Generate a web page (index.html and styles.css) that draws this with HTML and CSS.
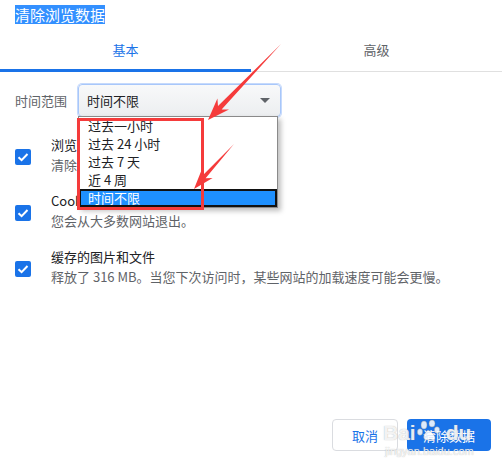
FILE: index.html
```html
<!DOCTYPE html>
<html lang="zh-CN">
<head>
  <meta charset="UTF-8">
  <title>清除浏览数据</title>
  <meta name="viewport" content="width=device-width, initial-scale=1">
  <link rel="stylesheet" href="styles.css">
</head>
<body>

  <div class="dialog">
    <h1 class="title"><span class="selected-text">清除浏览数据</span></h1>

    <div class="tabs">
      <div class="tab active">基本</div>
      <div class="tab">高级</div>
    </div>

    <div class="range-row">
      <span class="range-label">时间范围</span>
      <div class="select">
        <span>时间不限</span>
        <span class="select-arrow"></span>
      </div>
    </div>

    <div class="check-row">
      <span class="checkbox">
        <svg width="16" height="16" viewBox="0 0 16 16"><polyline points="3.5,8.2 6.6,11.2 12.5,5" fill="none" stroke="#fff" stroke-width="2"/></svg>
      </span>
      <div class="check-text">
        <div class="check-title">浏览记录</div>
        <div class="check-sub">清除所有已同步设备上的浏览记录</div>
      </div>
    </div>

    <div class="check-row">
      <span class="checkbox">
        <svg width="16" height="16" viewBox="0 0 16 16"><polyline points="3.5,8.2 6.6,11.2 12.5,5" fill="none" stroke="#fff" stroke-width="2"/></svg>
      </span>
      <div class="check-text">
        <div class="check-title">Cookie 及其他网站数据</div>
        <div class="check-sub">您会从大多数网站退出。</div>
      </div>
    </div>

    <div class="check-row">
      <span class="checkbox">
        <svg width="16" height="16" viewBox="0 0 16 16"><polyline points="3.5,8.2 6.6,11.2 12.5,5" fill="none" stroke="#fff" stroke-width="2"/></svg>
      </span>
      <div class="check-text">
        <div class="check-title">缓存的图片和文件</div>
        <div class="check-sub">释放了 316 MB。当您下次访问时，某些网站的加载速度可能会更慢。</div>
      </div>
    </div>

    <div class="footer">
      <button class="btn btn-cancel">取消</button>
      <button class="btn btn-primary">清除数据</button>
    </div>
  </div>

  <!-- 下拉列表 -->
  <ul class="dropdown">
    <li>过去一小时</li>
    <li>过去 24 小时</li>
    <li>过去 7 天</li>
    <li>近 4 周</li>
    <li class="current">时间不限</li>
  </ul>

  <!-- 标注 -->
  <div class="mark-box"></div>
  <svg class="arrows" width="502" height="466" viewBox="0 0 502 466">
    <polygon fill="#f53b3b" points="281,44 221.6,109.4 229,109.6 208,120 217.4,98.6 218,106"/>
    <polygon fill="#f53b3b" points="234,144 205.6,178.2 212.6,177.9 194,189 202.2,168.5 202.6,175.6"/>
  </svg>

  <div class="watermark">
    <div class="wm-logo">Bai<svg width="30" height="22" viewBox="0 0 30 22"><ellipse cx="8" cy="5" rx="3" ry="4"/><ellipse cx="16" cy="3.5" rx="3" ry="3.5"/><ellipse cx="4" cy="12" rx="2.6" ry="3.2"/><ellipse cx="21" cy="10" rx="2.6" ry="3.2"/><path d="M12 10 C7 14 6 20 11 20 C13 20 14 19 16 20 C21 21 20 14 12 10 Z"/></svg>du</div>
    <div class="wm-site">jingyan.baidu.com</div>
  </div>

</body>
</html>
```

FILE: styles.css
```css
body {
  margin: 0;
  font-family: "Noto Sans CJK SC", "Liberation Sans", sans-serif;
  background: #fff;
  color: #202124;
}

.dialog {
  width: 502px;
  height: 466px;
  display: flex;
  flex-direction: column;
  overflow: hidden;
}

.title {
  margin: 0;
  padding: 5px 15px 0;
  font-size: 15px;
  font-weight: normal;
  line-height: 19px;
  height: 19px;
}

.selected-text {
  background: #3390ff;
  color: #fff;
  display: inline-block;
}

.tabs {
  display: flex;
  border-bottom: 1px solid #e0e0e0;
}

.tab {
  flex: 1;
  text-align: center;
  font-size: 13px;
  line-height: 18px;
  padding: 17px 0 12px;
  color: #5f6368;
}

.tab.active {
  color: #1a73e8;
  padding-bottom: 9px;
  border-bottom: 3px solid #1a73e8;
  margin-bottom: -1px;
}

.range-row {
  display: flex;
  align-items: center;
  margin-top: 12px;
  padding-left: 15px;
}

.range-label {
  font-size: 13px;
  color: #5f6368;
  width: 63px;
}

.select {
  width: 193px;
  height: 31px;
  padding-left: 8px;
  border: 1px solid #a8c7fa;
  border-radius: 4px;
  background: linear-gradient(#f8f9fa, #eceef0);
  display: flex;
  align-items: center;
  justify-content: space-between;
  font-size: 13px;
  box-shadow: 0 0 0 1px #c6dafc;
}

.select-arrow {
  width: 0;
  height: 0;
  border-left: 5px solid transparent;
  border-right: 5px solid transparent;
  border-top: 5px solid #5f6368;
  margin-right: 10px;
}

.check-row {
  display: flex;
  align-items: flex-start;
  padding-left: 15px;
  margin-top: 16px;
}

.range-row + .check-row {
  margin-top: 18px;
}

.checkbox {
  width: 16px;
  height: 16px;
  border-radius: 2px;
  background: #1a73e8;
  margin-top: 14px;
  margin-right: 20px;
  display: flex;
}

.check-text {
  font-size: 13px;
  line-height: 20px;
}

.check-sub {
  color: #5f6368;
}

.footer {
  margin-top: auto;
  display: flex;
  justify-content: flex-end;
  gap: 9px;
  padding: 0 11px 15px 0;
}

.btn {
  height: 32px;
  font-family: inherit;
  font-size: 13px;
  border-radius: 4px;
  cursor: pointer;
}

.btn-cancel {
  width: 66px;
  background: #fff;
  color: #1a73e8;
  border: 1px solid #dadce0;
}

.btn-primary {
  width: 84px;
  background: #1a73e8;
  color: #fff;
  border: none;
}

/* ===== 下拉列表 ===== */
.dropdown {
  position: absolute;
  left: 78px;
  top: 116px;
  width: 198px;
  margin: 0;
  padding: 0;
  list-style: none;
  background: #fff;
  border: 1px solid #8a8a8a;
  box-shadow: 3px 3px 5px rgba(0,0,0,0.25);
  font-size: 13px;
  line-height: 18px;
  overflow: hidden;
}

.dropdown li {
  padding-left: 9px;
  height: 18px;
}

.dropdown li.current {
  background: #1e90ff;
  color: #fff;
  border: 2px solid #111;
  height: 14px;
  line-height: 14px;
  padding-left: 7px;
}

/* ===== 标注 ===== */
.mark-box {
  position: absolute;
  left: 77px;
  top: 118px;
  width: 121px;
  height: 86px;
  border: 3px solid #f53b3b;
}

.arrows {
  position: absolute;
  left: 0;
  top: 0;
  pointer-events: none;
}

.watermark {
  position: absolute;
  left: 383px;
  top: 420px;
  color: rgba(255,255,255,0.85);
  text-shadow: 0 0 1px rgba(140,140,140,0.7);
  font-family: "Liberation Sans", sans-serif;
}

.wm-logo {
  font-size: 21px;
  font-weight: bold;
  line-height: 24px;
  display: flex;
  align-items: flex-end;
}

.wm-logo svg {
  fill: rgba(255,255,255,0.85);
  stroke: rgba(150,150,150,0.5);
  stroke-width: 0.8;
  margin-bottom: 3px;
}

.wm-site {
  font-size: 11px;
  line-height: 12px;
  margin-left: 2px;
}
```
